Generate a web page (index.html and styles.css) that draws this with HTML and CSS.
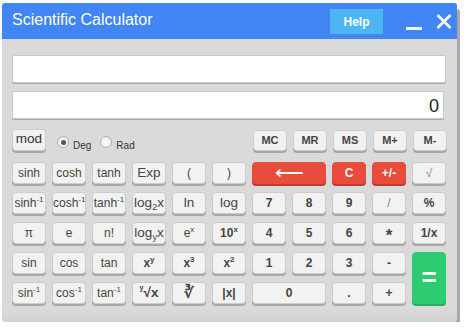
FILE: index.html
```html
<!DOCTYPE html>
<html>
<head>
<meta charset="utf-8">
<link rel="stylesheet" href="styles.css">
</head>
<body>
<div class="window">
  <div class="titlebar">
    <div class="title">Scientific Calculator</div>
    <div class="help">Help</div>
    <div class="minimize"></div>
    <svg class="close" width="16" height="15" viewBox="0 0 16 15"><path d="M1.5 1 L14.5 14 M14.5 1 L1.5 14" stroke="#fff" stroke-width="2.6" fill="none"/></svg>
  </div>
  <div class="body">
    <div class="display"></div>
    <div class="display result">0</div>
    <div class="toprow">
      <div class="btn mod">mod</div>
      <div class="radio checked"></div><span class="rlabel">Deg</span>
      <div class="radio"></div><span class="rlabel">Rad</span>
      <div class="spacer"></div>
      <div class="mem">
        <div class="btn bold">MC</div>
        <div class="btn bold">MR</div>
        <div class="btn bold">MS</div>
        <div class="btn bold">M+</div>
        <div class="btn bold">M-</div>
      </div>
    </div>
    <div class="keys">
      <div class="btn">sinh</div>
      <div class="btn">cosh</div>
      <div class="btn">tanh</div>
      <div class="btn big">Exp</div>
      <div class="btn">(</div>
      <div class="btn">)</div>
      <div class="btn red span2 arrow">&#x27F5;</div>
      <div class="btn red">C</div>
      <div class="btn red">+/-</div>
      <div class="btn light">&#x221A;</div>

      <div class="btn">sinh<sup>-1</sup></div>
      <div class="btn">cosh<sup>-1</sup></div>
      <div class="btn">tanh<sup>-1</sup></div>
      <div class="btn big">log<sub>2</sub>x</div>
      <div class="btn big">ln</div>
      <div class="btn big">log</div>
      <div class="btn bold">7</div>
      <div class="btn bold">8</div>
      <div class="btn bold">9</div>
      <div class="btn light">/</div>
      <div class="btn bold">%</div>

      <div class="btn">&#x3C0;</div>
      <div class="btn">e</div>
      <div class="btn">n!</div>
      <div class="btn big">log<sub>y</sub>x</div>
      <div class="btn">e<sup>x</sup></div>
      <div class="btn bold">10<sup>x</sup></div>
      <div class="btn bold">4</div>
      <div class="btn bold">5</div>
      <div class="btn bold">6</div>
      <div class="btn bold star">*</div>
      <div class="btn bold">1/x</div>

      <div class="btn">sin</div>
      <div class="btn">cos</div>
      <div class="btn">tan</div>
      <div class="btn bold">x<sup>y</sup></div>
      <div class="btn bold">x<sup>3</sup></div>
      <div class="btn bold">x<sup>2</sup></div>
      <div class="btn bold">1</div>
      <div class="btn bold">2</div>
      <div class="btn bold">3</div>
      <div class="btn bold">-</div>
      <div class="btn green">=</div>

      <div class="btn">sin<sup>-1</sup></div>
      <div class="btn">cos<sup>-1</sup></div>
      <div class="btn">tan<sup>-1</sup></div>
      <div class="btn bold big"><sup class="root">y</sup>&#x221A;x</div>
      <div class="btn bold cube">&#x221B;</div>
      <div class="btn bold">|x|</div>
      <div class="btn bold span2">0</div>
      <div class="btn bold">.</div>
      <div class="btn bold">+</div>
    </div>
  </div>
</div>
</body>
</html>
```
FILE: styles.css
```css
html, body {
  margin: 0;
  padding: 0;
  background: #ffffff;
}
body {
  font-family: "Liberation Sans", Arial, sans-serif;
}
.window {
  margin: 3px 0 0 2px;
  width: 455px;
  border-radius: 3px 3px 4px 4px;
  background: #dadada;
  box-shadow: 3px 6px 0 #a9a9a9;
}
.titlebar {
  height: 36px;
  background: #4285f4;
  display: flex;
  align-items: center;
  border-radius: 3px 3px 0 0;
  padding-left: 10px;
}
.title {
  color: #fff;
  font-size: 16px;
  flex: 1;
  margin-top: -2px;
}
.help {
  width: 53px;
  height: 25px;
  background: #4db6f2;
  color: #fff;
  font-weight: bold;
  font-size: 12px;
  display: flex;
  align-items: center;
  justify-content: center;
  margin-top: 1px;
  margin-right: 2px;
}
.minimize {
  width: 16px;
  height: 3px;
  background: #fff;
  margin: 14px 0 0 21px;
}
.close {
  margin: 1px 5px 0 14px;
}
.body {
  padding: 16px 10px 16px 10px;
  height: 251px;
  background: linear-gradient(#dadada 0, #dadada 95%, #d2d2d2 100%);
  border-radius: 0 0 4px 4px;
}
.display {
  width: 432px;
  height: 26px;
  background: #fff;
  border: 1px solid #c9c9c9;
  border-radius: 2px;
  box-shadow: 0 1px 0 #a9a9a9;
  margin-bottom: 8px;
}
.result {
  text-align: right;
  font-size: 18px;
  line-height: 28px;
  color: #222;
  box-sizing: border-box;
  padding-right: 4px;
  height: 28px;
}
.toprow {
  display: flex;
  align-items: flex-start;
  margin-top: 10px;
  height: 33px;
}
.spacer { flex: 1; }
.btn {
  box-sizing: border-box;
  width: 34px;
  height: 22px;
  background: #f2f2f2;
  border: 1px solid #cdcdcd;
  border-radius: 4px;
  box-shadow: 0 2px 0 #a8a8a8;
  color: #444;
  font-size: 12px;
  line-height: 20px;
  text-align: center;
  white-space: nowrap;
}
.btn.mod {
  font-size: 13.5px;
  color: #333;
  line-height: 17px;
}
.radio {
  width: 10px;
  height: 10px;
  border-radius: 50%;
  border: 1px solid #b4b4b4;
  background: radial-gradient(#fff, #e4e4e4);
  margin: 7px 4px 0 11px;
  box-sizing: content-box;
  position: relative;
}
.radio.checked::after {
  content: "";
  position: absolute;
  left: 2.5px;
  top: 2.5px;
  width: 5px;
  height: 5px;
  border-radius: 50%;
  background: #555;
}
.rlabel {
  font-size: 10px;
  color: #333;
  margin-top: 11px;
}
.rlabel + .radio { margin-left: 9px; }
.mem {
  display: flex;
  gap: 6px;
}
.mem .btn {
  height: 21px;
  font-size: 11px;
  line-height: 19px;
  margin-top: 1px;
}
.bold { font-weight: bold; }
.keys {
  display: grid;
  grid-template-columns: repeat(11, 34px);
  grid-auto-rows: 22px;
  column-gap: 6px;
  row-gap: 8px;
}
.keys .btn { width: auto; }
.span2 { grid-column: span 2; }
.big { font-size: 13.5px; }
.red {
  background: #e74c3c;
  border-color: #e74c3c;
  box-shadow: 0 2px 0 #c0392b;
  color: #fff;
  font-weight: bold;
}
.arrow { font-size: 20px; font-weight: normal; line-height: 19px; }
.green {
  grid-row: span 2;
  background: #2ecc71;
  border-color: #2ecc71;
  box-shadow: 0 2px 0 #27ae60;
  color: #fff;
  font-size: 26px;
  font-weight: bold;
  height: auto;
  line-height: 48px;
}
.light { color: #888; }
.star { font-size: 17px; line-height: 26px; }
.cube { font-size: 15px; }
sup {
  font-size: 8px;
  vertical-align: 5px;
  line-height: 0;
}
sub {
  font-size: 9px;
  vertical-align: -3px;
  line-height: 0;
}
sup.root {
  font-size: 7px;
  margin-right: 0;
  vertical-align: 7px;
}
```
